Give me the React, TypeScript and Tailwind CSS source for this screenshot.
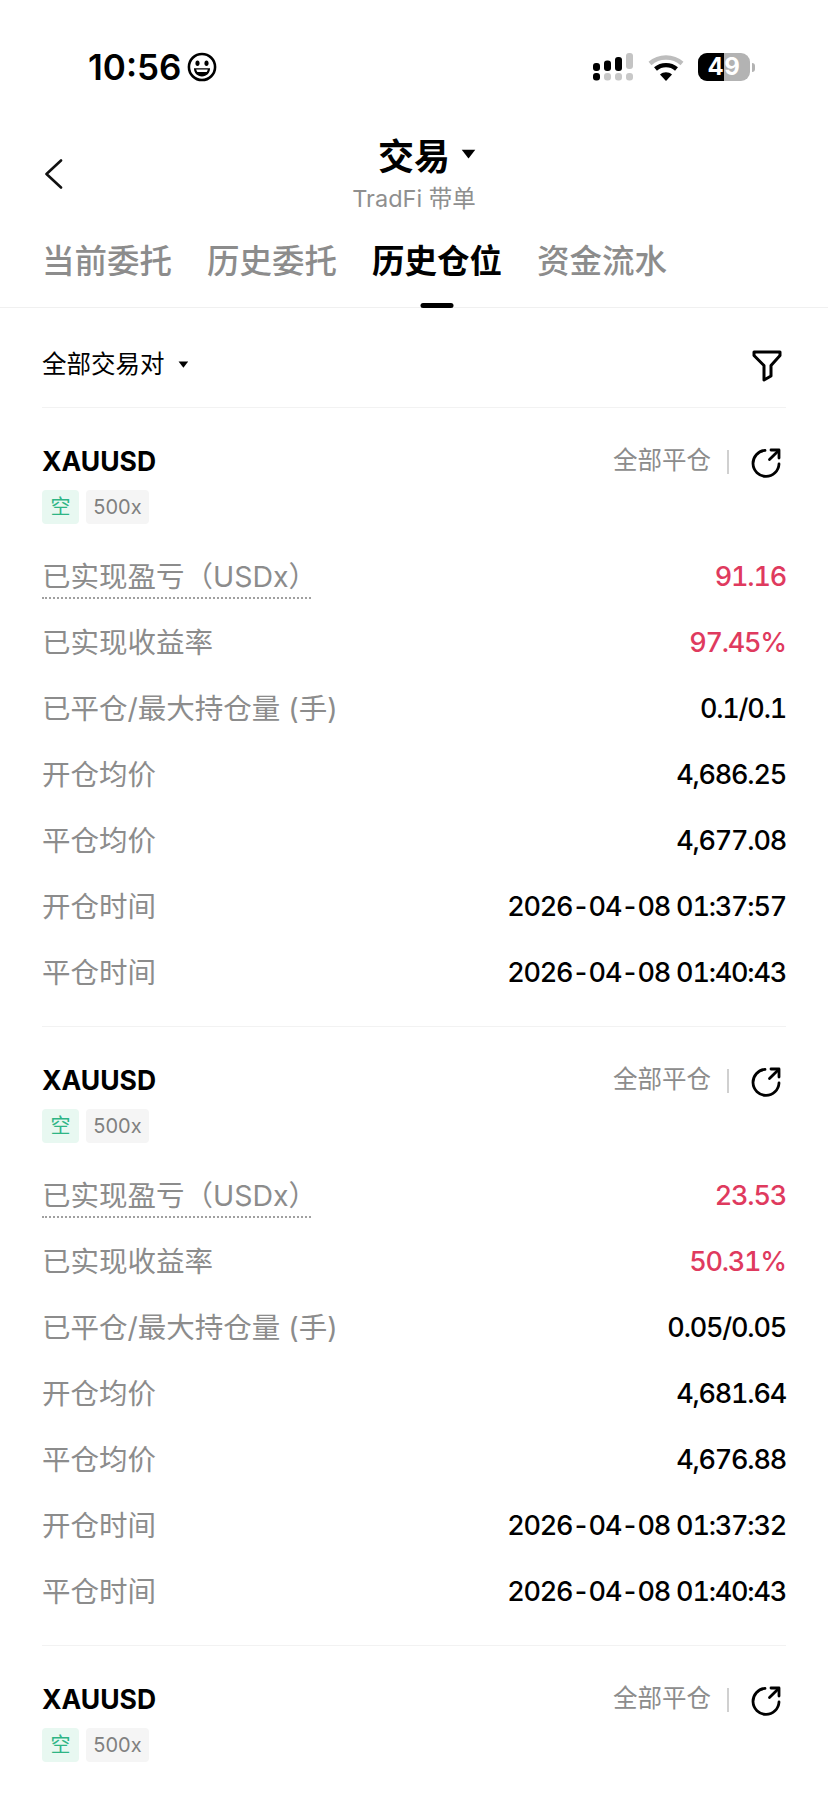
import React from "react";

const FONT = { fontFamily: 'Inter, "Noto Sans CJK SC", sans-serif' };

type Row = { label: string; value: string; tone?: "red"; dotted?: boolean };

const cards: Row[][] = [
  [
    { label: "已实现盈亏（USDx）", value: "91.16", tone: "red", dotted: true },
    { label: "已实现收益率", value: "97.45%", tone: "red" },
    { label: "已平仓/最大持仓量 (手)", value: "0.1/0.1" },
    { label: "开仓均价", value: "4,686.25" },
    { label: "平仓均价", value: "4,677.08" },
    { label: "开仓时间", value: "2026-04-08 01:37:57" },
    { label: "平仓时间", value: "2026-04-08 01:40:43" },
  ],
  [
    { label: "已实现盈亏（USDx）", value: "23.53", tone: "red", dotted: true },
    { label: "已实现收益率", value: "50.31%", tone: "red" },
    { label: "已平仓/最大持仓量 (手)", value: "0.05/0.05" },
    { label: "开仓均价", value: "4,681.64" },
    { label: "平仓均价", value: "4,676.88" },
    { label: "开仓时间", value: "2026-04-08 01:37:32" },
    { label: "平仓时间", value: "2026-04-08 01:40:43" },
  ],
  [],
];

function Smiley() {
  return (
    <svg width="30" height="30" viewBox="0 0 28 28" fill="none">
      <circle cx="14" cy="14" r="12.2" stroke="#000" strokeWidth="2.4" />
      <ellipse cx="9.8" cy="10.5" rx="1.9" ry="2.6" fill="#000" />
      <ellipse cx="18.2" cy="10.5" rx="1.9" ry="2.6" fill="#000" />
      <path d="M6.5 15.2h15c0 4.6-3.2 7.6-7.5 7.6s-7.5-3-7.5-7.6z" fill="#000" />
      <path d="M8.6 16.4h10.8c-.2 1-.5 1.6-1 2.2H9.6c-.5-.6-.8-1.2-1-2.2z" fill="#fff" />
    </svg>
  );
}

function Signal() {
  const tops = [
    { x: 0, y: 10, h: 8, c: "#000" },
    { x: 11, y: 7.5, h: 10.5, c: "#000" },
    { x: 22, y: 4, h: 14, c: "#000" },
    { x: 33, y: 0, h: 16, c: "#c4c4c4" },
  ];
  return (
    <svg width="41" height="28" viewBox="0 0 41 28">
      {tops.map((t) => (
        <rect key={t.x} x={t.x} y={t.y} width="7" height={t.h} rx="3" fill={t.c} />
      ))}
      {[0, 11, 22, 33].map((x, i) => (
        <rect key={x} x={x} y="20" width="7" height="7.5" rx="3" fill={i === 0 ? "#000" : "#c8c8c8"} />
      ))}
    </svg>
  );
}

function Wifi() {
  return (
    <svg width="36" height="27" viewBox="0 0 36 27" fill="none">
      <path d="M2 9.5C11 1.5 25 1.5 34 9.5" stroke="#bdbdbd" strokeWidth="4.4" />
      <path d="M7.5 15C13.5 9.8 22.5 9.8 28.5 15" stroke="#000" strokeWidth="4.4" />
      <path d="M12 20.5 18 27l6-6.5c-3.4-3-8.6-3-12 0z" fill="#000" />
    </svg>
  );
}

function Battery() {
  return (
    <div className="flex items-center">
      <div className="relative flex h-[28px] w-[52px] overflow-hidden rounded-[9px] bg-[#b3b3b3]">
        <div className="h-full w-[26px] bg-black" />
        <div className="absolute inset-0 flex items-center justify-center text-[24px] font-bold leading-none tracking-[0.5px] text-white">
          49
        </div>
      </div>
      <div className="ml-[2px] h-[9px] w-[3px] rounded-r-full bg-[#b3b3b3]" />
    </div>
  );
}

function Caret({ size = 1 }: { size?: number }) {
  return (
    <svg width={12 * size} height={8 * size} viewBox="0 0 12 8">
      <path d="M0.6 0.5h10.8L6 7.5z" fill="#000" />
    </svg>
  );
}

function FilterIcon() {
  return (
    <svg className="mt-[2px]" width="30" height="32" viewBox="0 0 30 32" fill="none">
      <path
        d="M2 2h26v3.5L19 15.5V26l-7 4V15.5L2 5.5z"
        stroke="#000"
        strokeWidth="3"
        strokeLinejoin="round"
      />
    </svg>
  );
}

function ShareIcon() {
  return (
    <svg className="mt-[6px]" width="32" height="32" viewBox="0 0 32 32" fill="none" stroke="#000" strokeWidth="2.8" strokeLinecap="round" strokeLinejoin="round">
      <path d="M15 3.4A13 13 0 1 0 29 17" />
      <path d="M19.5 12.5 28.4 3.8" />
      <path d="M21 3h8v8" />
    </svg>
  );
}

function InfoRow({ label, value, tone, dotted }: Row) {
  return (
    <div className="flex h-[66px] items-center justify-between">
      <span
        className={
          dotted
            ? "relative text-[28.5px] text-[#8c8c8c] after:absolute after:bottom-[-1px] after:left-0 after:w-[269px] after:border-b-2 after:border-dotted after:border-[#a0a0a0] after:content-['']"
            : "text-[28.5px] text-[#8c8c8c]"
        }
      >
        {label}
      </span>
      <span
        className={
          tone === "red"
            ? "text-[27px] font-medium tracking-[-1.2px] tabular-nums text-[#df3a5e]"
            : "text-[27px] font-medium tracking-[-1.2px] tabular-nums text-black"
        }
      >
        {value}
      </span>
    </div>
  );
}

function PositionCard({ rows }: { rows: Row[] }) {
  return (
    <section className="border-t border-[#f2f2f2] pb-[20px]">
      <div className="flex h-[73px] items-end justify-between pb-[2px]">
        <span className="text-[26.5px] font-bold leading-[36px] text-black">XAUUSD</span>
        <div className="flex items-center pr-[4px]">
          <span className="text-[24.5px] leading-[36px] text-[#8c8c8c]">全部平仓</span>
          <span className="ml-[16px] mr-[21px] mt-[4px] h-[24px] w-[2px] bg-[#d0d0d0]" />
          <ShareIcon />
        </div>
      </div>
      <div className="mt-[9px] flex gap-[7px]">
        <span className="flex h-[34px] w-[37px] items-center justify-center rounded-[4px] bg-[#e8f8f1] text-[20px] text-[#2eb585]">
          空
        </span>
        <span className="flex h-[34px] w-[63px] items-center justify-center rounded-[4px] bg-[#f5f5f5] text-[20px] text-[#808080]">
          500x
        </span>
      </div>
      <div className="mt-[20px]">
        {rows.map((r) => (
          <InfoRow key={r.label} {...r} />
        ))}
      </div>
    </section>
  );
}

export default function App() {
  const tabs = ["当前委托", "历史委托", "历史仓位", "资金流水"];
  return (
    <div className="h-[1801px] w-[828px] overflow-hidden bg-white" style={FONT}>
      <header className="flex h-[102px] items-center justify-between pl-[88px] pr-[73px] pt-[32px]">
        <div className="flex items-center gap-[6px]">
          <span className="text-[35px] font-semibold leading-none text-black">10:56</span>
          <Smiley />
        </div>
        <div className="flex items-center gap-[14px]">
          <Signal />
          <Wifi />
          <Battery />
        </div>
      </header>

      <nav className="relative flex flex-col items-center pt-[31px]">
        <svg className="absolute left-[44px] top-[57px]" width="19" height="30" viewBox="0 0 19 30" fill="none">
          <path d="M17 1.5 2.5 15 17 28.5" stroke="#111" strokeWidth="2.6" strokeLinecap="round" strokeLinejoin="round" />
        </svg>
        <div className="relative h-[48px]">
          <span className="text-[36px] font-bold leading-[48px] text-black">交易</span>
          <span className="absolute left-[83px] top-[16px] flex">
            <Caret size={1.25} />
          </span>
        </div>
        <div className="mt-[2px] text-[23.5px] leading-[32px] text-[#8f8f8f]">TradFi 带单</div>
      </nav>

      <div className="relative mt-[15px] flex h-[78px] gap-[35px] border-b border-[#f0f0f0] pl-[42px]">
        {tabs.map((t, i) => (
          <div key={t} className="relative h-[63px]">
            <span className={i === 2 ? "text-[32.5px] font-semibold leading-[64px] text-black" : "text-[32.5px] font-medium leading-[64px] text-[#8c8c8c]"}>
              {t}
            </span>
            {i === 2 && (
              <div className="absolute bottom-[-15px] left-1/2 h-[5px] w-[33px] -translate-x-1/2 rounded-full bg-black" />
            )}
          </div>
        ))}
      </div>

      <div className="px-[42px]">
        <div className="flex h-[99px] items-center justify-between pr-[4px] pt-[14px]">
          <div className="flex items-center gap-[13px]">
            <span className="text-[24.5px] leading-none text-black">全部交易对</span>
            <Caret size={0.9} />
          </div>
          <FilterIcon />
        </div>
        {cards.map((rows, i) => (
          <PositionCard key={i} rows={rows} />
        ))}
      </div>
    </div>
  );
}
